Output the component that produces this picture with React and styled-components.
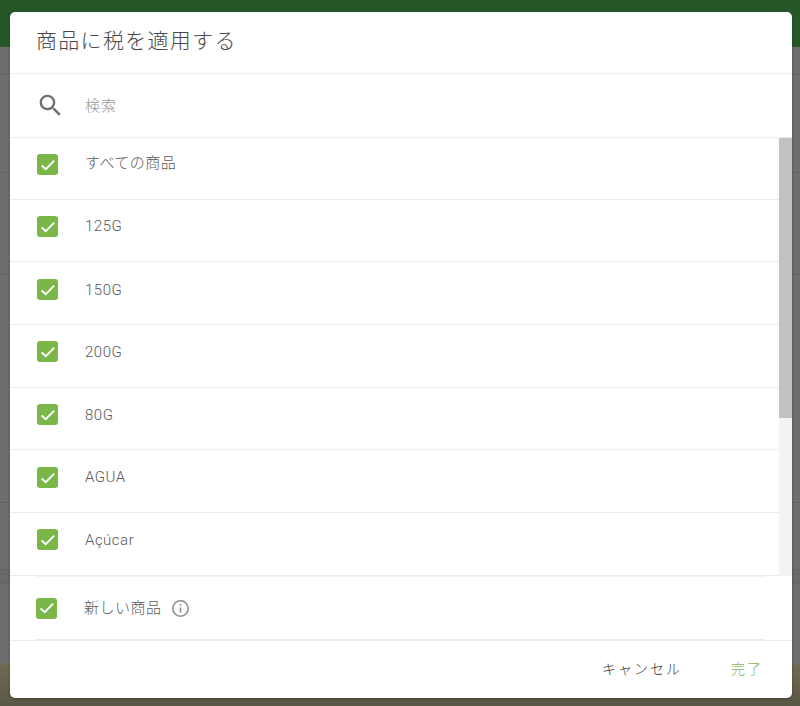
import React from 'react'
import styled, { createGlobalStyle } from 'styled-components'

const GlobalStyle = createGlobalStyle`
    html, body {
        margin: 0;
        padding: 0;
        height: 100%;
        overflow: hidden;
    }
    body {
        font-family: Roboto, "Noto Sans CJK JP", sans-serif;
    }
`

const Page = styled.div`
    position: relative;
    width: 800px;
    height: 706px;
    display: flex;
    flex-direction: column;
    overflow: hidden;
    background: #6e6e6e;
`

const TopBar = styled.div`
    height: 47px;
    background: #265727;
`

const PageRow = styled.div`
    height: ${(props) => props.$height}px;
    flex: none;
    box-sizing: border-box;
    border-bottom: 1px solid #646464;
    background: ${(props) => props.$bg || '#6e6e6e'};
`

const BottomBar = styled.div`
    margin-top: auto;
    height: 43px;
    background: linear-gradient(#6f6c52, #5a5845);
`

const Dialog = styled.div`
    position: absolute;
    left: 10px;
    top: 12px;
    width: 782px;
    height: 686px;
    display: flex;
    flex-direction: column;
    background: #fff;
    border-radius: 5px;
    overflow: hidden;
    box-shadow: 0 1px 3px rgba(0, 0, 0, 0.3);
`

const Header = styled.div`
    height: 61px;
    flex: none;
    display: flex;
    align-items: center;
    padding-left: 26px;
    border-bottom: 1px solid #ebebeb;
    font-size: 21px;
    font-weight: 300;
    line-height: 56px;
    letter-spacing: 1.3px;
    color: #484848;
`

const HeaderText = styled.span`
    margin-top: -4px;
`

const SearchBar = styled.div`
    height: 63px;
    flex: none;
    display: flex;
    align-items: center;
    border-bottom: 1px solid #ebebeb;
    color: #969696;
    font-size: 15px;
    font-weight: 300;
    letter-spacing: 1px;
`

const SearchText = styled.span`
    margin-top: -3px;
`

const SearchIcon = styled.svg`
    width: 29px;
    height: 29px;
    margin-left: 26px;
    margin-right: 20px;
    fill: #707070;
`

const ListArea = styled.div`
    height: 438px;
    flex: none;
    display: flex;
`

const List = styled.div`
    flex: 1;
    display: flex;
    flex-direction: column;
`

const Row = styled.div`
    height: ${(props) => props.$height}px;
    box-sizing: border-box;
    display: flex;
    align-items: flex-start;
    padding-top: ${(props) => props.$top}px;
    padding-left: 27px;
    border-bottom: 1px solid #ebebeb;
    font-size: 15px;
    font-weight: 300;
    letter-spacing: 0.5px;
    color: #5a5a5a;
`

const Label = styled.span`
    margin-left: 27px;
    margin-top: ${(props) => props.$shift || 0}px;
    line-height: 20px;
`

const Box = styled.span`
    width: 21px;
    height: 21px;
    flex: none;
    display: flex;
    align-items: center;
    justify-content: center;
    border-radius: 3px;
    background: #7ab648;
`

const ScrollTrack = styled.div`
    width: 13px;
    flex: none;
    background: #f3f3f3;
`

const ScrollThumb = styled.div`
    height: 280px;
    background: #c2c2c2;
`

const NewItemRow = styled.div`
    height: 65px;
    flex: none;
    box-sizing: border-box;
    margin: 0 27px 0 26px;
    display: flex;
    align-items: center;
    border-bottom: 2px solid #ececec;
    border-top: 1px solid #f3f3f3;
    font-size: 15px;
    font-weight: 300;
    letter-spacing: 0.5px;
    color: #5a5a5a;
`

const InfoIcon = styled.svg`
    width: 19px;
    height: 19px;
    margin-left: 9px;
    fill: none;
    stroke: #8f8f8f;
`

const Footer = styled.div`
    flex: 1;
    display: flex;
    align-items: center;
    justify-content: flex-end;
    padding-right: 29px;
    padding-bottom: 4px;
    gap: 49px;
    box-shadow: 0 -1px 0 #ebebeb;
    font-size: 14px;
    font-weight: 300;
    letter-spacing: 2px;
`

const FooterButton = styled.span`
    color: ${(props) => (props.$primary ? '#7fb35a' : '#383838')};
`

const Check = () => (
    <svg width="16" height="16" viewBox="0 0 16 16" fill="none">
        <path d="M1.6 8.4 L5.8 12.2 L14.2 3.6" stroke="#fff" strokeWidth="2" />
    </svg>
)

const items = [
    { name: 'すべての商品', height: 62, top: 16, shift: -1 },
    { name: '125G', height: 62, top: 16, shift: 0 },
    { name: '150G', height: 63, top: 17, shift: 1 },
    { name: '200G', height: 63, top: 16, shift: 1 },
    { name: '80G', height: 62, top: 16, shift: 1 },
    { name: 'AGUA', height: 63, top: 17, shift: 0 },
    { name: 'Açúcar', height: 63, top: 16, shift: 1 },
]

const App = () => (
    <Page>
        <GlobalStyle />
        <TopBar />
        <PageRow $height={28} />
        <PageRow $height={98} />
        <PageRow $height={102} />
        <PageRow $height={228} />
        <PageRow $height={67} />
        <PageRow $height={14} $bg="#696969" />
        <BottomBar />
        <Dialog>
            <Header>
                <HeaderText>商品に税を適用する</HeaderText>
            </Header>
            <SearchBar>
                <SearchIcon viewBox="0 0 24 24">
                    <path d="M15.5 14h-.79l-.28-.27A6.47 6.47 0 0 0 16 9.5 6.5 6.5 0 1 0 9.5 16c1.61 0 3.09-.59 4.23-1.57l.27.28v.79l5 4.99L20.49 19l-4.99-5zm-6 0C7.01 14 5 11.99 5 9.5S7.01 5 9.5 5 14 7.01 14 9.5 11.99 14 9.5 14z" />
                </SearchIcon>
                <SearchText>検索</SearchText>
            </SearchBar>
            <ListArea>
                <List>
                    {items.map((item) => (
                        <Row key={item.name} $height={item.height} $top={item.top}>
                            <Box>
                                <Check />
                            </Box>
                            <Label $shift={item.shift}>{item.name}</Label>
                        </Row>
                    ))}
                </List>
                <ScrollTrack>
                    <ScrollThumb />
                </ScrollTrack>
            </ListArea>
            <NewItemRow>
                <Box>
                    <Check />
                </Box>
                <Label>新しい商品</Label>
                <InfoIcon viewBox="0 0 19 19">
                    <circle cx="9.5" cy="9.5" r="7.7" strokeWidth="1.6" />
                    <path d="M9.5 8.4 V13.6 M9.5 5.2 V6.8" strokeWidth="1.6" />
                </InfoIcon>
            </NewItemRow>
            <Footer>
                <FooterButton>キャンセル</FooterButton>
                <FooterButton $primary>完了</FooterButton>
            </Footer>
        </Dialog>
    </Page>
)

export default App
